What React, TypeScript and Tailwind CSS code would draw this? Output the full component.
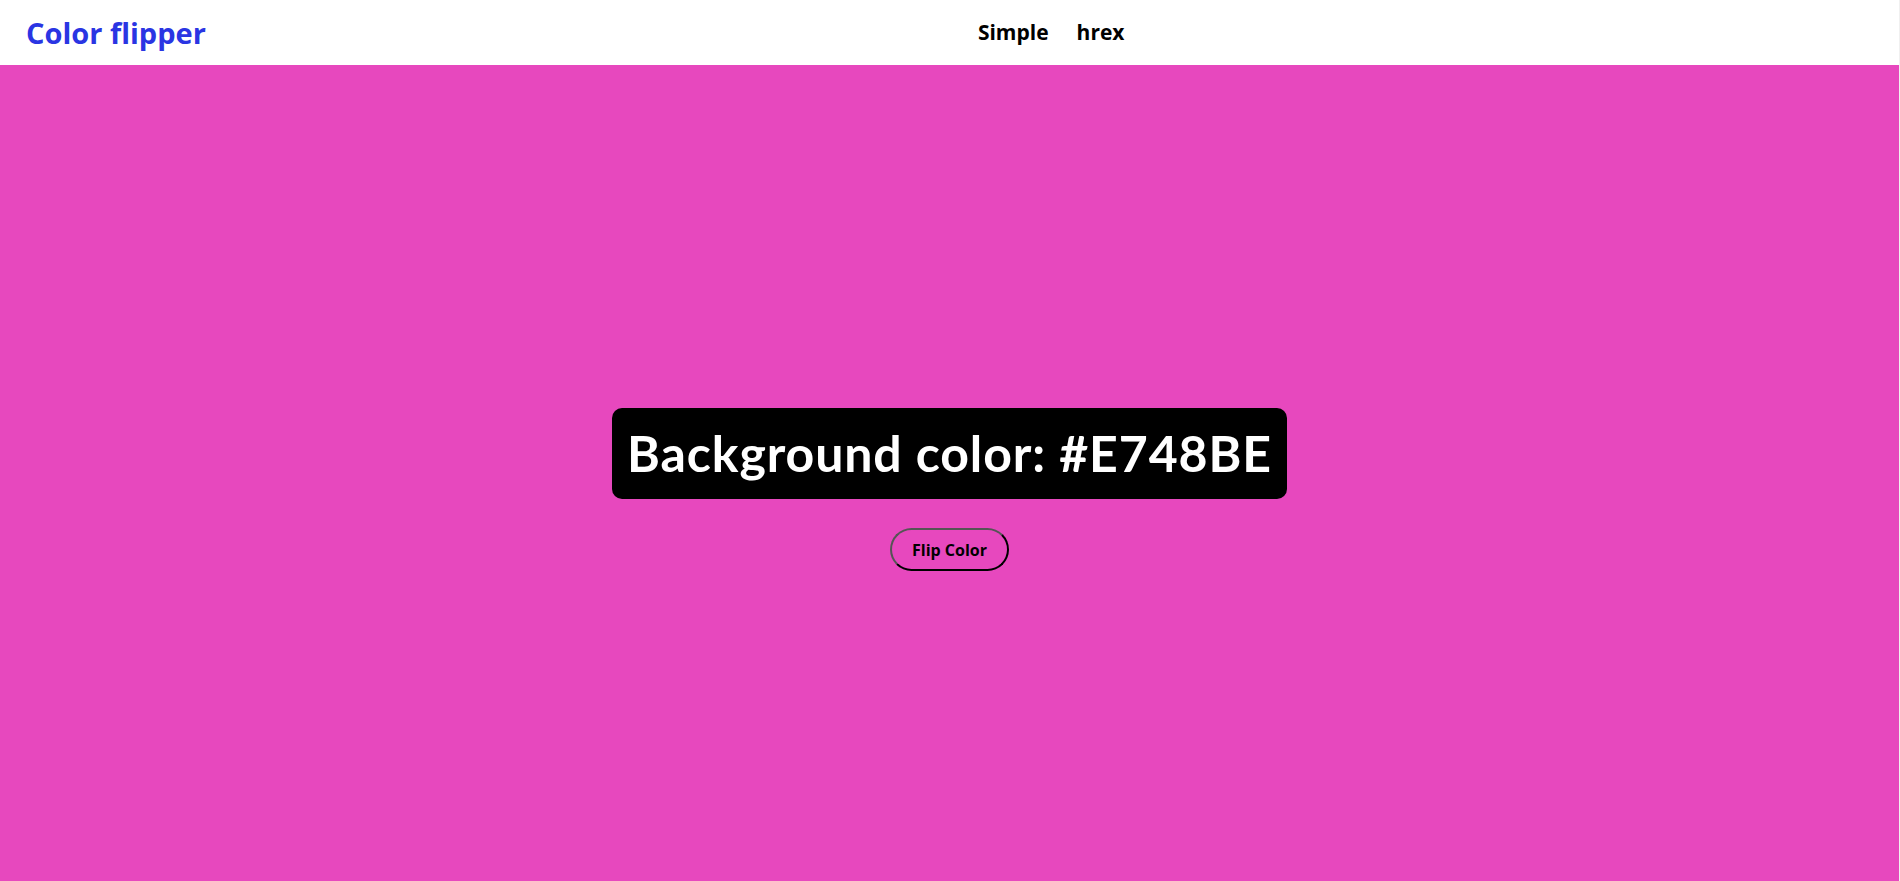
export default function App() {
    return (
        <div className="min-h-screen flex flex-col font-['Open_Sans',sans-serif] bg-[#E748BE] border-r border-[#f0f0f0]">
            <header className="h-[65px] bg-white flex items-center px-[26px]">
                <a href="#" className="text-[29px] font-bold text-[#2a35e3] leading-none">
                    Color flipper
                </a>
                <nav className="ml-[772px] flex items-center gap-[28px]">
                    <a href="#" className="text-[21px] font-bold text-black">Simple</a>
                    <a href="#" className="text-[21px] font-bold text-black">hrex</a>
                </nav>
            </header>

            <main className="flex-1 flex flex-col items-center justify-center pt-[33px]">
                <h2 className="bg-black text-white font-['Lato',sans-serif] text-[50px] tracking-[0.9px] font-bold rounded-[10px] px-[15px] h-[91px] flex items-center">
                    Background color: #E748BE
                </h2>
                <button className="mt-[29px] px-[20px] h-[43px] rounded-full border-2 border-t-[#555] border-l-[#555] border-r-black border-b-black text-[16px] font-bold text-black bg-transparent">
                    Flip Color
                </button>
            </main>
        </div>
    );
}
